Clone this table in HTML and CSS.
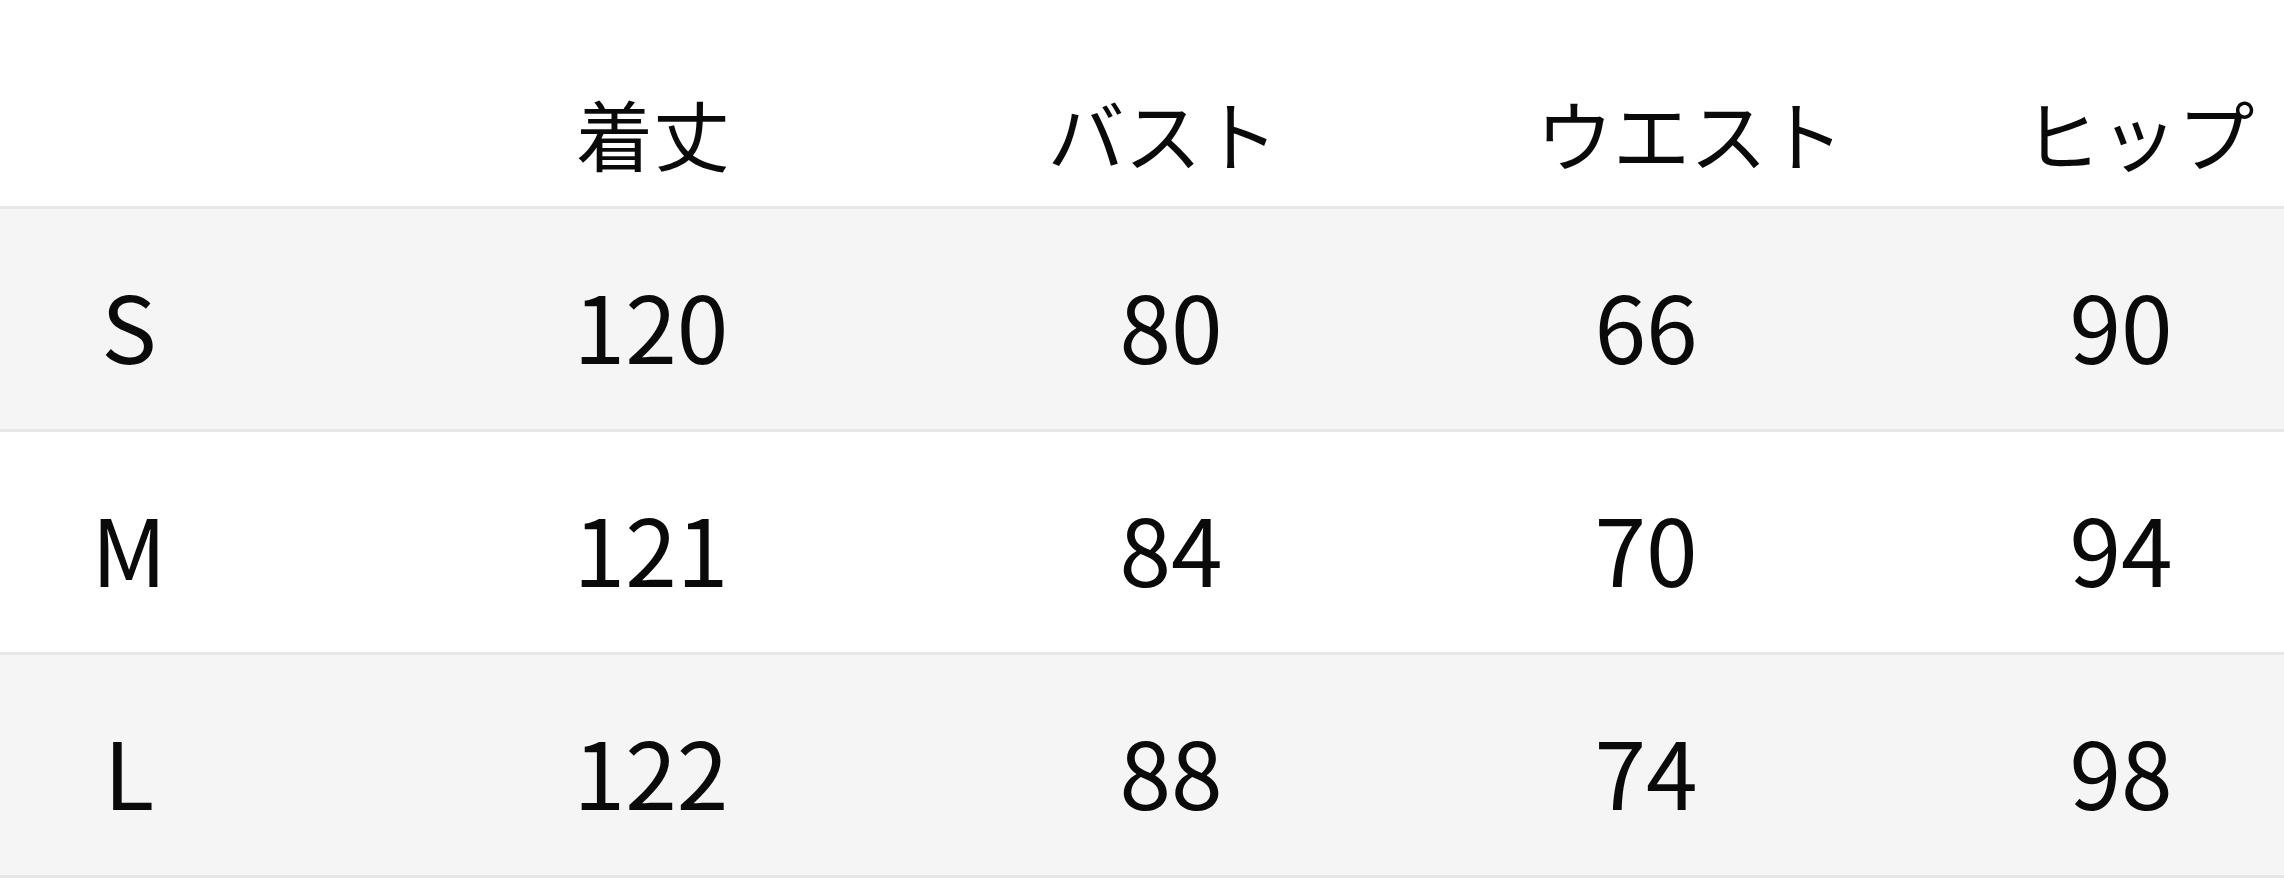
FILE: index.html
```html
<!DOCTYPE html>
<html lang="ja">
<head>
<meta charset="utf-8">
<title>サイズ表</title>
<link rel="stylesheet" href="styles.css">
</head>
<body>
<div class="size-table">
  <div class="row head">
    <div class="cell"></div>
    <div class="cell"><span class="lbl h2">着丈</span></div>
    <div class="cell"><span class="lbl h3">バスト</span></div>
    <div class="cell"><span class="lbl h4">ウエスト</span></div>
    <div class="cell"><span class="lbl h5">ヒップ</span></div>
  </div>
  <div class="row body shaded">
    <div class="cell">S</div>
    <div class="cell">120</div>
    <div class="cell">80</div>
    <div class="cell">66</div>
    <div class="cell">90</div>
  </div>
  <div class="row body">
    <div class="cell">M</div>
    <div class="cell">121</div>
    <div class="cell">84</div>
    <div class="cell">70</div>
    <div class="cell">94</div>
  </div>
  <div class="row body shaded last">
    <div class="cell">L</div>
    <div class="cell">122</div>
    <div class="cell">88</div>
    <div class="cell">74</div>
    <div class="cell">98</div>
  </div>
</div>
</body>
</html>
```
FILE: styles.css
```css
html, body {
  margin: 0;
  padding: 0;
  background: #ffffff;
}

body {
  font-family: "Noto Sans CJK JP", "Noto Sans", sans-serif;
  color: #0a0a0a;
}

.size-table {
  display: flex;
  flex-direction: column;
  width: 2284px;
}

.row {
  display: grid;
  grid-template-columns: 258px 786px 254px 696px 254px;
  align-items: center;
  box-sizing: border-box;
}

.cell {
  display: flex;
  justify-content: center;
  white-space: nowrap;
}

.head {
  height: 206px;
  font-size: 77px;
  line-height: 1;
  align-items: end;
  padding-bottom: 35px;
}

.lbl { display: inline-block; }
.h2 { margin-left: 4px; }
.h3 { margin-left: -16px; }
.h4 { margin-left: 88px; }
.h5 { margin-left: 36px; }

.body {
  height: 223px;
  border-top: 3px solid #e7e7e7;
  font-size: 93px;
  line-height: 1;
  padding-top: 8px;
}

.shaded {
  background: #f5f5f5;
}

.last {
  border-bottom: 3px solid #e7e7e7;
  height: 226px;
}
```
